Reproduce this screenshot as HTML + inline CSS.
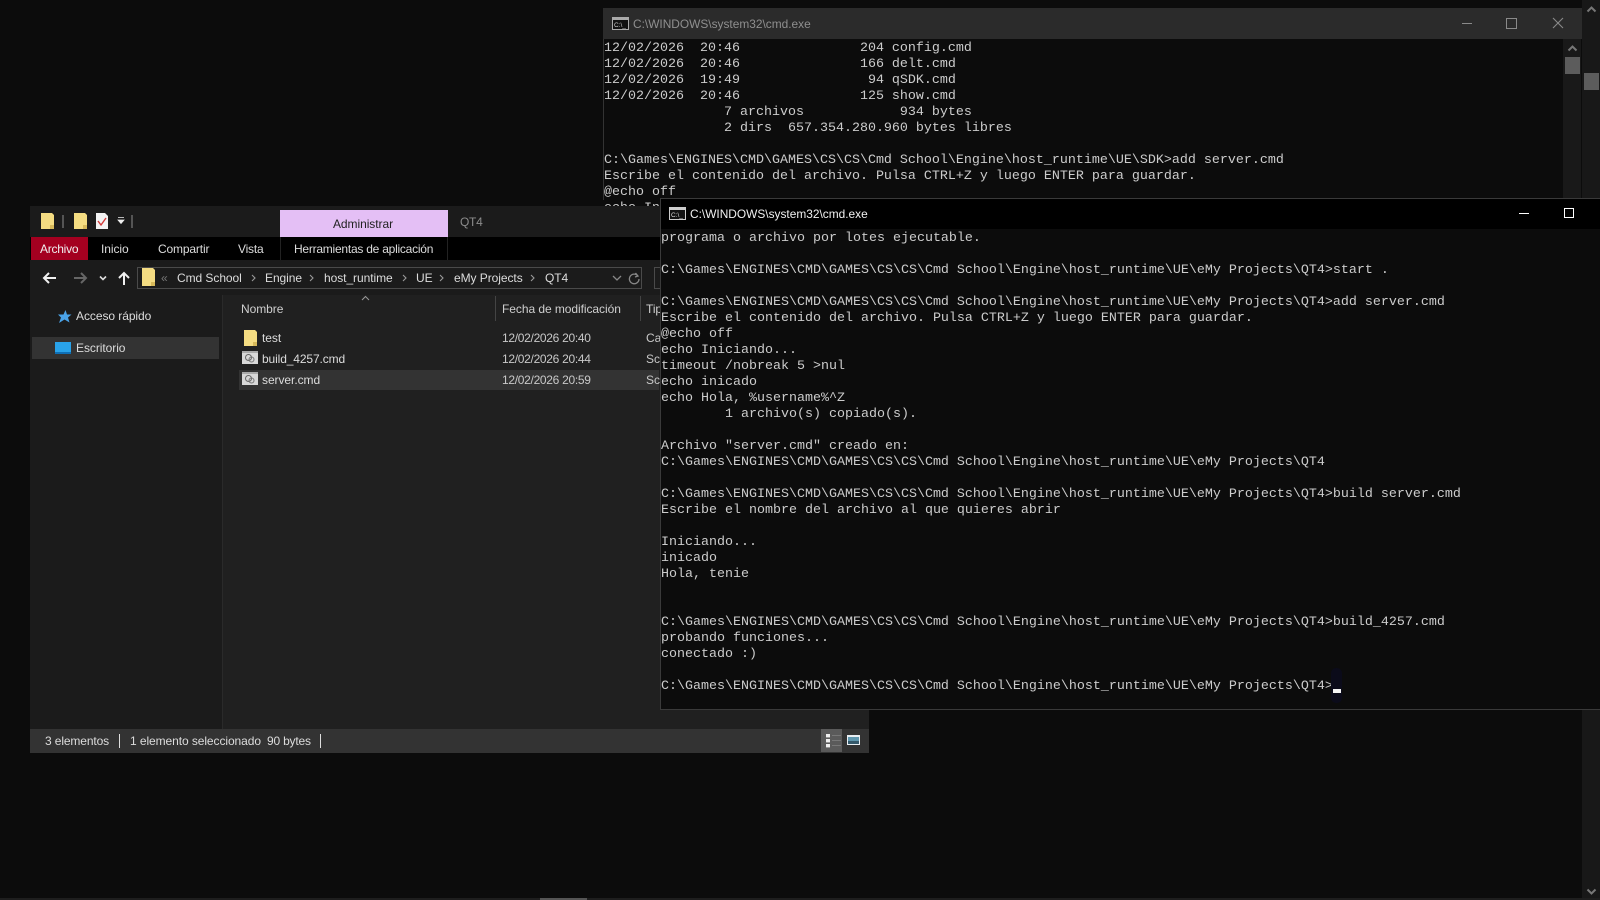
<!DOCTYPE html>
<html><head><meta charset="utf-8"><style>
html,body{margin:0;padding:0;width:1600px;height:900px;overflow:hidden;background:#0c0c0c}
div,span,svg{position:absolute}
.t{white-space:pre;font:12px/16px "Liberation Sans",sans-serif;color:#dcdcdc;letter-spacing:-.06px}
.c{left:0;white-space:pre;font:13.33px/16px "Liberation Mono",monospace;color:#cccccc;height:16px}
</style></head><body>
<!-- back console scrollbar -->
<div style="left:1582px;top:0;width:18px;height:900px;background:#181818"></div>
<div style="left:1584px;top:73px;width:15px;height:17px;background:#5c5c5c"></div>
<svg style="left:1586px;top:5px" width="11" height="8"><path d="M1.5 6.5L5.5 2.5L9.5 6.5" fill="none" stroke="#777" stroke-width="2"/></svg>
<svg style="left:1586px;top:888px" width="11" height="8"><path d="M1.5 1.5L5.5 5.5L9.5 1.5" fill="none" stroke="#777" stroke-width="2"/></svg>
<div style="left:0;top:898px;width:1600px;height:2px;background:#1e1e1e"></div>
<div style="left:540px;top:898px;width:47px;height:2px;background:#555"></div>

<!-- console 1 -->
<div style="left:603px;top:8px;width:979px;height:192px;background:#0c0c0c;border-left:1px solid #333;box-sizing:border-box"></div>
<div style="left:603px;top:8px;width:979px;height:31px;background:#2b2b2b"></div>
<svg style="left:612px;top:17px" width="17" height="13"><rect x=".5" y=".5" width="16" height="12" fill="#111" stroke="#aaa"/><rect x="1" y="1" width="15" height="2" fill="#aaa"/><text x="2" y="10" font-family="Liberation Sans" font-size="6.5" fill="#ccc">C:\_</text></svg>
<span class="t" style="left:633px;top:16px;color:#8f8f8f;font-size:11.9px;letter-spacing:0">C:\WINDOWS\system32\cmd.exe</span>
<div style="left:1462px;top:23px;width:10px;height:1px;background:#8a8a8a"></div>
<div style="left:1506px;top:18px;width:9px;height:9px;border:1px solid #8a8a8a"></div>
<svg style="left:1552px;top:17px" width="12" height="12"><path d="M1 1L11 11M11 1L1 11" stroke="#8a8a8a" stroke-width="1.1"/></svg>
<div style="left:1563px;top:39px;width:18px;height:161px;background:#191919"></div>
<div style="left:1565px;top:57px;width:15px;height:17px;background:#5c5c5c"></div>
<svg style="left:1567px;top:44px" width="11" height="8"><path d="M1.5 6.5L5.5 2.5L9.5 6.5" fill="none" stroke="#777" stroke-width="2"/></svg>
<div style="left:604px;top:39px;width:950px;height:167px;overflow:hidden">
<span class="c" style="top:2px">12/02/2026  20:46               204 config.cmd</span>
<span class="c" style="top:18px">12/02/2026  20:46               166 delt.cmd</span>
<span class="c" style="top:34px">12/02/2026  19:49                94 qSDK.cmd</span>
<span class="c" style="top:50px">12/02/2026  20:46               125 show.cmd</span>
<span class="c" style="top:66px">               7 archivos            934 bytes</span>
<span class="c" style="top:82px">               2 dirs  657.354.280.960 bytes libres</span>
<span class="c" style="top:114px">C:\Games\ENGINES\CMD\GAMES\CS\CS\Cmd School\Engine\host_runtime\UE\SDK&gt;add server.cmd</span>
<span class="c" style="top:130px">Escribe el contenido del archivo. Pulsa CTRL+Z y luego ENTER para guardar.</span>
<span class="c" style="top:146px">@echo off</span>
<span class="c" style="top:162px">echo Iniciando...</span>
</div>

<!-- explorer -->
<div style="left:30px;top:206px;width:839px;height:547px;background:#202020"></div>
<div style="left:30px;top:206px;width:839px;height:31px;background:#1b1b1b"></div>
<div style="left:30px;top:237px;width:839px;height:23px;background:#000"></div>
<div style="left:30px;top:260px;width:839px;height:35px;background:#1b1b1b"></div>
<div style="left:30px;top:295px;width:192px;height:434px;background:#1b1b1b;border-right:1px solid #2a2a2a"></div>
<div style="left:30px;top:729px;width:839px;height:24px;background:#333"></div>
<!-- qat -->
<svg style="left:40px;top:212px" width="100" height="18">
<path d="M1 1H12L14 3V17H1Z" fill="#f4dc82"/><path d="M10 13H14V17H10Z" fill="#d7b95a"/>
<rect x="22" y="3" width="2" height="13" fill="#555"/>
<path d="M34 1H45L47 3V17H34Z" fill="#f4dc82"/><path d="M43 13H47V17H43Z" fill="#d7b95a"/>
<path d="M56 1H65L68 4V17H56Z" fill="#f2f2f2"/><path d="M58 9L61 13L66 6" fill="none" stroke="#d23a3a" stroke-width="1.4"/>
<path d="M78 5.5H84M78 8H84L81 11.5Z" stroke="#eee" fill="#eee" stroke-width=".8"/>
<rect x="91" y="3" width="2" height="13" fill="#555"/>
</svg>
<div style="left:280px;top:210px;width:168px;height:27px;background:#e4bff5"></div>
<span class="t" style="left:279px;top:216px;width:168px;text-align:center;color:#222">Administrar</span>
<span class="t" style="left:460px;top:214px;color:#8c8c8c;letter-spacing:-.3px">QT4</span>
<div style="left:31px;top:237px;width:57px;height:23px;background:#a40020"></div>
<span class="t" style="left:40px;top:241px;color:#f0f0f0;letter-spacing:-.25px">Archivo</span>
<span class="t" style="left:101px;top:241px">Inicio</span>
<span class="t" style="left:158px;top:241px;letter-spacing:-.15px">Compartir</span>
<span class="t" style="left:238px;top:241px;letter-spacing:-.2px">Vista</span>
<div style="left:280px;top:237px;width:168px;height:23px;border-left:1px solid #222;border-right:1px solid #222;box-sizing:border-box"></div>
<span class="t" style="left:294px;top:241px;letter-spacing:-.24px">Herramientas de aplicación</span>
<!-- nav arrows -->
<svg style="left:42px;top:270px" width="92" height="16">
<path d="M14 8H2M7 3L2 8L7 13" fill="none" stroke="#f0f0f0" stroke-width="2"/>
<path d="M32 8H44M39 3L44 8L39 13" fill="none" stroke="#666" stroke-width="2"/>
<path d="M58 6.5L61 9.5L64 6.5" fill="none" stroke="#ddd" stroke-width="1.6"/>
<path d="M82 15V3M77 8L82 3L87 8" fill="none" stroke="#f0f0f0" stroke-width="2"/>
</svg>
<div style="left:137px;top:267px;width:505px;height:22px;border:1px solid #4a4a4a;box-sizing:border-box"></div>
<div style="left:654px;top:267px;width:20px;height:22px;border:1px solid #4a4a4a;box-sizing:border-box"></div>
<svg style="left:142px;top:268px" width="14" height="19"><path d="M0 0H11L13 2V18H0Z" fill="#f4dc82"/><path d="M9 14H13V18H9Z" fill="#d7b95a"/></svg>
<span class="t" style="left:161px;top:270px;color:#777">«</span>
<span class="t" style="left:177px;top:270px">Cmd School</span>
<span class="t" style="left:265px;top:270px">Engine</span>
<span class="t" style="left:324px;top:270px">host_runtime</span>
<span class="t" style="left:416px;top:270px">UE</span>
<span class="t" style="left:454px;top:270px">eMy Projects</span>
<span class="t" style="left:545px;top:270px">QT4</span>
<svg style="left:250px;top:273px" width="300" height="10" fill="none" stroke="#999" stroke-width="1.1">
<path d="M2 2L5 5L2 8M60 2L63 5L60 8M153 2L156 5L153 8M190 2L193 5L190 8M281 2L284 5L281 8"/></svg>
<svg style="left:611px;top:271px" width="30" height="15" fill="none" stroke="#888" stroke-width="1.3">
<path d="M2 5L6 9L10 5"/><path d="M27 5A4.8 4.8 0 1 0 28 8M24.5 2L27 5L24 6"/></svg>
<!-- headers -->
<span class="t" style="left:241px;top:301px;color:#cfcfcf">Nombre</span>
<svg style="left:361px;top:295px" width="9" height="6"><path d="M1 5L4.5 1.5L8 5" fill="none" stroke="#999"/></svg>
<div style="left:495px;top:296px;width:1px;height:25px;background:#444"></div>
<span class="t" style="left:502px;top:301px;color:#cfcfcf">Fecha de modificación</span>
<div style="left:640px;top:296px;width:1px;height:25px;background:#444"></div>
<span class="t" style="left:646px;top:301px;color:#cfcfcf">Tipo</span>
<!-- nav -->
<svg style="left:57px;top:309px" width="15" height="15"><path d="M8.5 1L10 5.5H14.5L11 8.5L12.5 13.5L7.5 10.5L2 14L4 8.5L1 5.5H6.5Z" fill="#4aa3e8"/></svg>
<span class="t" style="left:76px;top:308px">Acceso rápido</span>
<div style="left:32px;top:337px;width:187px;height:22px;background:#333"></div>
<div style="left:55px;top:342px;width:16px;height:12px;background:#29a3ea"></div>
<div style="left:55px;top:352px;width:16px;height:2px;background:#0f6fb5"></div>
<span class="t" style="left:76px;top:340px">Escritorio</span>
<!-- rows -->
<div style="left:239px;top:370px;width:420px;height:20px;background:#333"></div>
<svg style="left:244px;top:330px" width="13" height="17"><path d="M0 0H11L13 2V16H0Z" fill="#f4dc82"/><path d="M9 12H13V16H9Z" fill="#d7b95a"/></svg>
<svg style="left:242px;top:351px" width="16" height="13"><rect width="16" height="13" fill="#d8d8d8"/><rect y="0" width="16" height="2" fill="#aaa"/><circle cx="6.5" cy="6.5" r="3" fill="none" stroke="#666"/><circle cx="9.5" cy="8.5" r="2.5" fill="none" stroke="#777"/></svg>
<svg style="left:242px;top:372px" width="16" height="13"><rect width="16" height="13" fill="#d8d8d8"/><rect y="0" width="16" height="2" fill="#aaa"/><circle cx="6.5" cy="6.5" r="3" fill="none" stroke="#666"/><circle cx="9.5" cy="8.5" r="2.5" fill="none" stroke="#777"/></svg>
<span class="t" style="left:262px;top:330px">test</span>
<span class="t" style="left:262px;top:351px;letter-spacing:-.12px">build_4257.cmd</span>
<span class="t" style="left:262px;top:372px">server.cmd</span>
<span class="t" style="left:502px;top:330px;color:#c8c8c8;letter-spacing:-.3px">12/02/2026 20:40</span>
<span class="t" style="left:502px;top:351px;color:#c8c8c8;letter-spacing:-.3px">12/02/2026 20:44</span>
<span class="t" style="left:502px;top:372px;color:#c8c8c8;letter-spacing:-.3px">12/02/2026 20:59</span>
<span class="t" style="left:646px;top:330px;color:#c8c8c8">Ca</span>
<span class="t" style="left:646px;top:351px;color:#c8c8c8">Scr</span>
<span class="t" style="left:646px;top:372px;color:#c8c8c8">Scr</span>
<!-- status -->
<span class="t" style="left:45px;top:733px;letter-spacing:-.12px">3 elementos</span>
<div style="left:119px;top:734px;width:1px;height:14px;background:#ddd"></div>
<span class="t" style="left:130px;top:733px;letter-spacing:-.08px">1 elemento seleccionado</span>
<span class="t" style="left:267px;top:733px;letter-spacing:-.2px">90 bytes</span>
<div style="left:320px;top:734px;width:1px;height:14px;background:#ddd"></div>
<div style="left:821px;top:729px;width:21px;height:23px;background:#5a5a5a"></div>
<svg style="left:823px;top:733px" width="40" height="16">
<g fill="none" stroke="#777"><path d="M9 2.5H18M9 7.5H18M9 12.5H18"/></g>
<rect x="3" y="1" width="4" height="3.4" fill="#eee"/><rect x="3" y="6" width="4" height="3.4" fill="#eee"/><rect x="3" y="11" width="4" height="3.4" fill="#eee"/>
<rect x="24" y="2" width="13" height="10" fill="#e8eef2"/><rect x="25" y="4" width="11" height="7" fill="#5f97ae"/><rect x="25" y="8" width="11" height="3" fill="#34586a"/></svg>

<!-- console 2 -->
<div style="left:660px;top:198px;width:940px;height:512px;background:#0c0c0c;border:solid #3a3a3a;border-width:1px 0 1px 1px;box-sizing:border-box"></div>
<div style="left:661px;top:199px;width:939px;height:30px;background:#000"></div>
<svg style="left:669px;top:207px" width="17" height="13"><rect x=".5" y=".5" width="16" height="12" fill="#111" stroke="#ccc"/><rect x="1" y="1" width="15" height="2" fill="#ccc"/><text x="2" y="10" font-family="Liberation Sans" font-size="6.5" fill="#ddd">C:\_</text></svg>
<span class="t" style="left:690px;top:206px;color:#f0f0f0;font-size:11.9px;letter-spacing:0">C:\WINDOWS\system32\cmd.exe</span>
<div style="left:1519px;top:213px;width:10px;height:1px;background:#fff"></div>
<div style="left:1564px;top:208px;width:8px;height:8px;border:1px solid #fff"></div>
<div style="left:661px;top:229px;width:939px;height:480px;overflow:hidden">
<span class="c" style="top:2px">programa o archivo por lotes ejecutable.</span>
<span class="c" style="top:34px">C:\Games\ENGINES\CMD\GAMES\CS\CS\Cmd School\Engine\host_runtime\UE\eMy Projects\QT4&gt;start .</span>
<span class="c" style="top:66px">C:\Games\ENGINES\CMD\GAMES\CS\CS\Cmd School\Engine\host_runtime\UE\eMy Projects\QT4&gt;add server.cmd</span>
<span class="c" style="top:82px">Escribe el contenido del archivo. Pulsa CTRL+Z y luego ENTER para guardar.</span>
<span class="c" style="top:98px">@echo off</span>
<span class="c" style="top:114px">echo Iniciando...</span>
<span class="c" style="top:130px">timeout /nobreak 5 &gt;nul</span>
<span class="c" style="top:146px">echo inicado</span>
<span class="c" style="top:162px">echo Hola, %username%^Z</span>
<span class="c" style="top:178px">        1 archivo(s) copiado(s).</span>
<span class="c" style="top:210px">Archivo "server.cmd" creado en:</span>
<span class="c" style="top:226px">C:\Games\ENGINES\CMD\GAMES\CS\CS\Cmd School\Engine\host_runtime\UE\eMy Projects\QT4</span>
<span class="c" style="top:258px">C:\Games\ENGINES\CMD\GAMES\CS\CS\Cmd School\Engine\host_runtime\UE\eMy Projects\QT4&gt;build server.cmd</span>
<span class="c" style="top:274px">Escribe el nombre del archivo al que quieres abrir</span>
<span class="c" style="top:306px">Iniciando...</span>
<span class="c" style="top:322px">inicado</span>
<span class="c" style="top:338px">Hola, tenie</span>
<span class="c" style="top:386px">C:\Games\ENGINES\CMD\GAMES\CS\CS\Cmd School\Engine\host_runtime\UE\eMy Projects\QT4&gt;build_4257.cmd</span>
<span class="c" style="top:402px">probando funciones...</span>
<span class="c" style="top:418px">conectado :)</span>
<span class="c" style="top:450px">C:\Games\ENGINES\CMD\GAMES\CS\CS\Cmd School\Engine\host_runtime\UE\eMy Projects\QT4&gt;</span>
</div>
<div style="left:1331px;top:668px;width:11px;height:35px;background:#0b0b1a;border-radius:5px"></div>
<div style="left:1333px;top:689px;width:8px;height:4px;background:#f5f5f5"></div>
</body></html>
